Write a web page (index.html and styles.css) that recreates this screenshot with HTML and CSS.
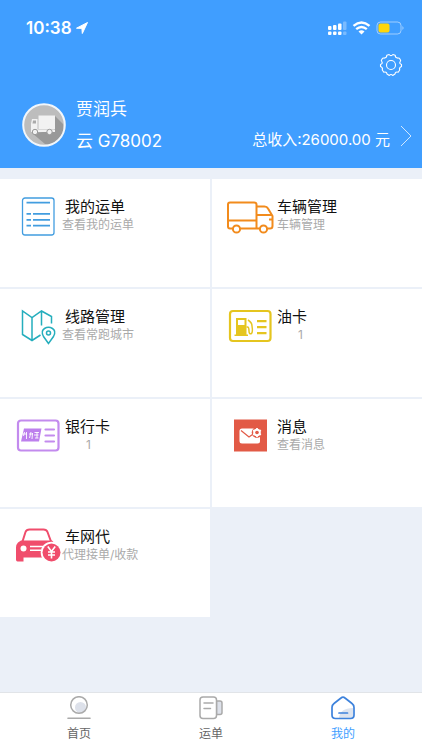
FILE: index.html
```html
<!DOCTYPE html>
<html lang="zh-CN">
<head>
<meta charset="utf-8">
<meta name="viewport" content="width=device-width, initial-scale=1">
<title>我的</title>
<link rel="stylesheet" href="styles.css">
</head>
<body>
<header class="header">
  <div class="status">
    <span class="time">10:38</span>
    <svg class="locate" width="12" height="12" viewBox="0 0 12 12" aria-hidden="true"><path d="M0.5 6.2 11.5 0.5 6.3 11.5 5.9 6.4Z" fill="#fff" stroke="#fff" stroke-linejoin="round"/></svg>
    <svg class="signals" width="76" height="14" viewBox="0 0 76 14" aria-hidden="true">
      <g fill="#fff"><rect x="0" y="5" width="3.5" height="4" rx="1"/><rect x="5" y="4" width="3.5" height="5" rx="1"/><rect x="10" y="2.5" width="3.5" height="6.5" rx="1"/><rect x="0" y="10.5" width="3.5" height="3.5" rx="1"/><rect x="5" y="10.5" width="3.5" height="3.5" rx="1"/><rect x="10" y="10.5" width="3.5" height="3.5" rx="1"/></g>
      <g fill="#fff" opacity=".3"><rect x="15" y="0.5" width="3.5" height="8.5" rx="1"/><rect x="15" y="10.5" width="3.5" height="3.5" rx="1"/></g>
      <g fill="none" stroke="#fff" stroke-width="2.4"><path d="M25.5 4.9Q33.500-1.900 41.500 4.900M28.200 8.200Q33.500 3.800 38.800 8.200"/></g>
      <path d="M30.5 10.400Q33.500 7.900 36.500 10.400L33.500 13.400Z" fill="#fff"/>
      <rect x="49" y="1" width="24" height="12" rx="3.5" fill="none" stroke="#fff" stroke-opacity=".5"/>
      <rect x="50.5" y="2.5" width="11" height="9" rx="2" fill="#ffd60a"/>
      <path d="M74.5 5Q76.5 7 74.5 9Z" fill="#fff" opacity=".6"/>
    </svg>
  </div>
  <div class="tools">
    <button class="gear" type="button" aria-label="设置">
      <svg width="24" height="24" viewBox="0 0 24 24" fill="none" stroke="#fff" stroke-width="1.1" stroke-linejoin="round"><circle cx="12" cy="12" r="4.5"/><path d="M10.100 1.500Q12 3.800 13.900 1.500L16.200 2.300Q16.200 5 18.900 5.100Q20.200 4.700 21 6.200Q22.200 7.700 21.200 8.600Q19.800 10.600 22.500 11.500V13.500Q19.800 14.500 20.700 17L19.200 19.200Q16.400 18.500 16 21L13.700 22.500Q12 20.500 10.300 22.500L8 21Q7.600 18.500 4.800 19.200L3.300 17Q4.200 14.500 1.500 13.500V11.500Q4.200 10.600 2.800 8.600Q1.800 7.700 3 6.200Q3.800 4.700 5.100 5.100Q7.800 5 7.800 2.300Z"/></svg>
    </button>
  </div>
  <a class="profile" href="#income">
    <svg class="avatar" width="44" height="44" viewBox="0 0 44 44" aria-hidden="true">
      <circle cx="22" cy="22" r="20.8" fill="#bdbdbd"/>
      <path d="M33 13 41 21Q43 34 31 40Q27 42 23 41L10 30 32 28Z" fill="#999"/>
      <circle cx="22" cy="22" r="20.8" fill="none" stroke="#f1f6fb" stroke-width="2"/>
      <g fill="#f2f2f2"><path d="M16.500 12.500H33V26H16.500ZM10 16H15.500V28H9V20.500Z"/><path d="M9 26.500H33V29H9Z"/></g>
      <path d="M11 17.500H14V20.500H10.500Z" fill="#aaa"/>
      <g fill="#f2f2f2" stroke="#999"><circle cx="13" cy="29" r="2.7"/><circle cx="27.5" cy="29" r="2.7"/></g>
    </svg>
    <span class="who"><span>贾润兵</span><span>云 G78002</span></span>
    <span class="income">总收入:26000.00 元</span>
    <svg class="arrow" width="12" height="22" viewBox="0 0 12 22" fill="none" stroke="#fff" stroke-opacity=".75" aria-hidden="true"><path d="M1 1 11 11 1 21"/></svg>
  </a>
</header>

<main class="grid">
  <a class="card" href="#waybills">
    <svg class="icon" viewBox="0 0 48 40" aria-hidden="true" fill="none" stroke="#429de0"><rect x="8.5" y="2" width="31.5" height="37" rx="2.5" stroke-width="1.3"/><path d="M12.500 6.700H36M12.500 17.800H17M19 17.800H36M12.500 23.800H17M19 23.800H36M12.500 29.700H17M19 29.700H36" stroke-width="1.8"/></svg>
    <span class="text"><strong>我的运单</strong><small class="wide">查看我的运单</small></span>
  </a>
  <a class="card" href="#vehicles">
    <svg class="icon" viewBox="0 0 48 40" aria-hidden="true" fill="none" stroke="#f28b1c" stroke-width="2" stroke-linejoin="round"><path d="M6.500 32.500H4Q2 32.500 2 30.500V8.500Q2 6.500 4 6.500H28Q30.500 6.500 30.500 8.500V32.500M14.500 32.500H33.500M41.500 32.500H44Q46.500 32.500 46.500 30V20L42 12.500Q41 10.500 38.500 10.500H30.500M2 24.500H30.500M30.500 19H45.500M46.500 23.500H43"/><circle cx="10.500" cy="33" r="3.600"/><circle cx="37.500" cy="33" r="3.600"/></svg>
    <span class="text"><strong>车辆管理</strong><small>车辆管理</small></span>
  </a>
  <a class="card" href="#routes">
    <svg class="icon" viewBox="0 0 48 40" aria-hidden="true" fill="none" stroke="#25aebd" stroke-width="1.5"><path d="M26.500 29 18 34.500 8.500 28.500V5L18 11.500 27.500 5 37.500 10.500V17.500M18 11.500V34.500M27.500 5V19.500"/><path d="M34.500 37.500 29.500 30.500Q26.500 25 30.500 22.500Q34.500 20 38.500 22.500Q42.500 25 39.500 30.500Z"/><circle cx="34.500" cy="27" r="2"/></svg>
    <span class="text"><strong>线路管理</strong><small class="wide">查看常跑城市</small></span>
  </a>
  <a class="card" href="#fuel">
    <svg class="icon" viewBox="0 0 48 40" aria-hidden="true"><g fill="none" stroke="#e5c51f"><rect x="4" y="5" width="40.500" height="30" rx="3" stroke-width="2.200"/><path d="M31 15.200H40.500M31 21.200H40.500M31 27.200H40.500" stroke-width="2.200"/><path d="M20.500 21H21.500Q23 21 23 25Q23 28.500 25.500 27.500Q27 26 26 20Q26 16.500 22 14" stroke-width="1.500"/></g><path fill="#e5c51f" fill-rule="evenodd" d="M10 12H20.500V28.500H22V30H8.500V28.500H10ZM12 14V19H18.500V14Z"/></svg>
    <span class="text"><strong>油卡</strong><small class="count">1</small></span>
  </a>
  <a class="card" href="#bank">
    <svg class="icon" viewBox="0 0 48 40" aria-hidden="true"><g fill="none" stroke="#c38bee"><rect x="4" y="4.500" width="40.500" height="30" rx="3" stroke-width="2.200"/><path d="M31.500 13.500H40M31.500 19.500H40M31.500 25.500H40" stroke-width="2.200" stroke-linecap="round"/></g><path d="M10 12.500H27.500L25 25.500H7Z" fill="#bd80ed"/><path d="M8.500 18H13M10.500 16 9.500 20M12.500 16V23M15 18H19M17 16 15.500 22M18.500 17 18 23M20.500 16.500H25M20 19H24.500M21 22H24.500M23 16V22" fill="none" stroke="#fff" stroke-width=".9"/></svg>
    <span class="text"><strong>银行卡</strong><small class="count">1</small></span>
  </a>
  <a class="card" href="#messages">
    <svg class="icon" viewBox="0 0 48 40" aria-hidden="true"><path d="M8 3.500H41V35.500H8Z" fill="#e25a46"/><rect x="13.500" y="12.500" width="20.500" height="15" rx="2.500" fill="#fff"/><path d="M15 14.500 23 21 30 16" fill="none" stroke="#e25a46" stroke-width="1.200"/><circle cx="31" cy="16.500" r="5.300" fill="#e25a46"/><circle cx="31" cy="16.500" r="2.800" fill="none" stroke="#fff" stroke-width="2"/><path d="M31 12V21M27.100 14.200 34.900 18.800M27.100 18.800 34.900 14.200" stroke="#fff" stroke-width="1.800"/><circle cx="31" cy="16.500" r="1.800" fill="#e25a46"/></svg>
    <span class="text"><strong>消息</strong><small>查看消息</small></span>
  </a>
  <a class="card" href="#agent">
    <svg class="icon" viewBox="0 0 48 40" aria-hidden="true"><path d="M8.500 15.500 11.500 6Q12.500 3.500 15.500 3.500H29.500Q32.500 3.500 33.500 6L37 15.500" fill="none" stroke="#f04d6c" stroke-width="2"/><path d="M7 14.500H38L43 19.500V31.500H9.500V35.500H3.500Q2 35.500 2 33.500V21.500Q2 18.500 4 16.500Z" fill="#f04d6c"/><path d="M16 20.500H29M16 24.200H27" stroke="#fff" stroke-width="1.400"/><circle cx="9.500" cy="22.500" r="3" fill="#fff"/><circle cx="37.500" cy="26.500" r="10.800" fill="#fff"/><circle cx="37.500" cy="26.500" r="9" fill="#f04d6c"/><path d="M33.800 20.500 37.500 25.500 41.200 20.500M37.500 25.500V32.500M34 26H41M34 29H41" fill="none" stroke="#fff" stroke-width="1.600"/></svg>
    <span class="text"><strong>车网代</strong><small class="wide">代理接单/收款</small></span>
  </a>
</main>

<nav class="tabs">
  <a href="#home">
    <svg width="24" height="24" viewBox="0 0 24 24" aria-hidden="true"><circle cx="13.500" cy="11.500" r="5.500" fill="#dde1ea"/><circle cx="12" cy="9" r="8.300" fill="none" stroke="#aaa" stroke-width="1.500"/><path d="M1 22.200H23" stroke="#aaa" stroke-width="1.600" stroke-linecap="round"/></svg>
    首页
  </a>
  <a href="#orders">
    <svg width="24" height="24" viewBox="0 0 24 24" aria-hidden="true" stroke="#aaa" stroke-width="1.500"><path d="M17.500 5H21Q23 5 23 7V16.500Q23 18.500 21 18.500H17.500Z" fill="#dde1ea"/><rect x="1" y="1" width="16.500" height="21.500" rx="3" fill="#fff"/><path d="M5 7H14M5 12.500H11.500" stroke-linecap="round"/></svg>
    运单
  </a>
  <a class="current" href="#mine" aria-current="page">
    <svg width="24" height="24" viewBox="0 0 24 24" aria-hidden="true"><path d="M8 22Q9 12 22 12V22Z" fill="#dde4ef"/><path d="M10 2 3 7.500Q1 9 1 11.500V19Q1 22.500 4.500 22.500H19.500Q23 22.500 23 19V11.500Q23 9 21 7.500L14 2Q12 .2 10 2Z" fill="none" stroke="#3d82dc" stroke-width="1.700"/><path d="M8 17H16.500" stroke="#3d82dc" stroke-width="1.700" stroke-linecap="round"/></svg>
    我的
  </a>
</nav>
</body>
</html>
```
FILE: styles.css
```css
* { box-sizing: border-box; }

body {
  margin: 0;
  min-height: 100vh;
  display: flex;
  flex-direction: column;
  background: #ebf0f8;
  font-family: Inter, "Noto Sans CJK SC", sans-serif;
}

a { color: inherit; text-decoration: none; }
svg { display: block; flex: none; }

.header { padding-bottom: 11px; background: #409eff; color: #fff; }

.status {
  display: flex;
  align-items: center;
  gap: 4px;
  padding: 18px 18px 0 26px;
  line-height: 20px;
}
.time { font-size: 17px; font-weight: 600; }
.signals { margin-left: auto; }

.tools {
  display: flex;
  justify-content: flex-end;
  padding: 15px 19px 0;
}
.gear { padding: 0; border: 0; background: none; cursor: pointer; }

.profile {
  display: flex;
  align-items: center;
  padding: 16px 10px 0 22px;
}
.who {
  display: flex;
  flex-direction: column;
  margin-left: 10px;
  font-size: 17px;
  line-height: 32px;
}
.income {
  margin: 30px 10px 0 auto;
  font-size: 15px;
  line-height: 24px;
}
.arrow { margin-top: 22px; }

.grid {
  display: grid;
  grid-template-columns: 1fr 1fr;
  grid-auto-rows: minmax(108px, auto);
  gap: 2px;
  margin-top: 11px;
}
.card {
  display: flex;
  padding: 17px 0 0 14px;
  background: #fff;
}
.icon { width: 48px; height: 40px; }
.text { display: flex; flex-direction: column; padding: 1px 0 0 3px; }
.text strong { font-size: 15px; font-weight: 400; line-height: 20px; color: #111; }
.text small { font-size: 12px; line-height: 16px; color: #aaa; }
.text .wide { margin-left: -3px; }
.text .count { padding-left: 21px; }

.tabs {
  display: flex;
  margin-top: auto;
  padding: 3px 13px 8px;
  border-top: 1px solid #e1e4e8;
  background: #fff;
}
.tabs a {
  flex: 1;
  display: flex;
  flex-direction: column;
  align-items: center;
  gap: 6px;
  font-size: 12px;
  line-height: 16px;
  color: #666;
}
.tabs .current { color: #409eff; }
```
